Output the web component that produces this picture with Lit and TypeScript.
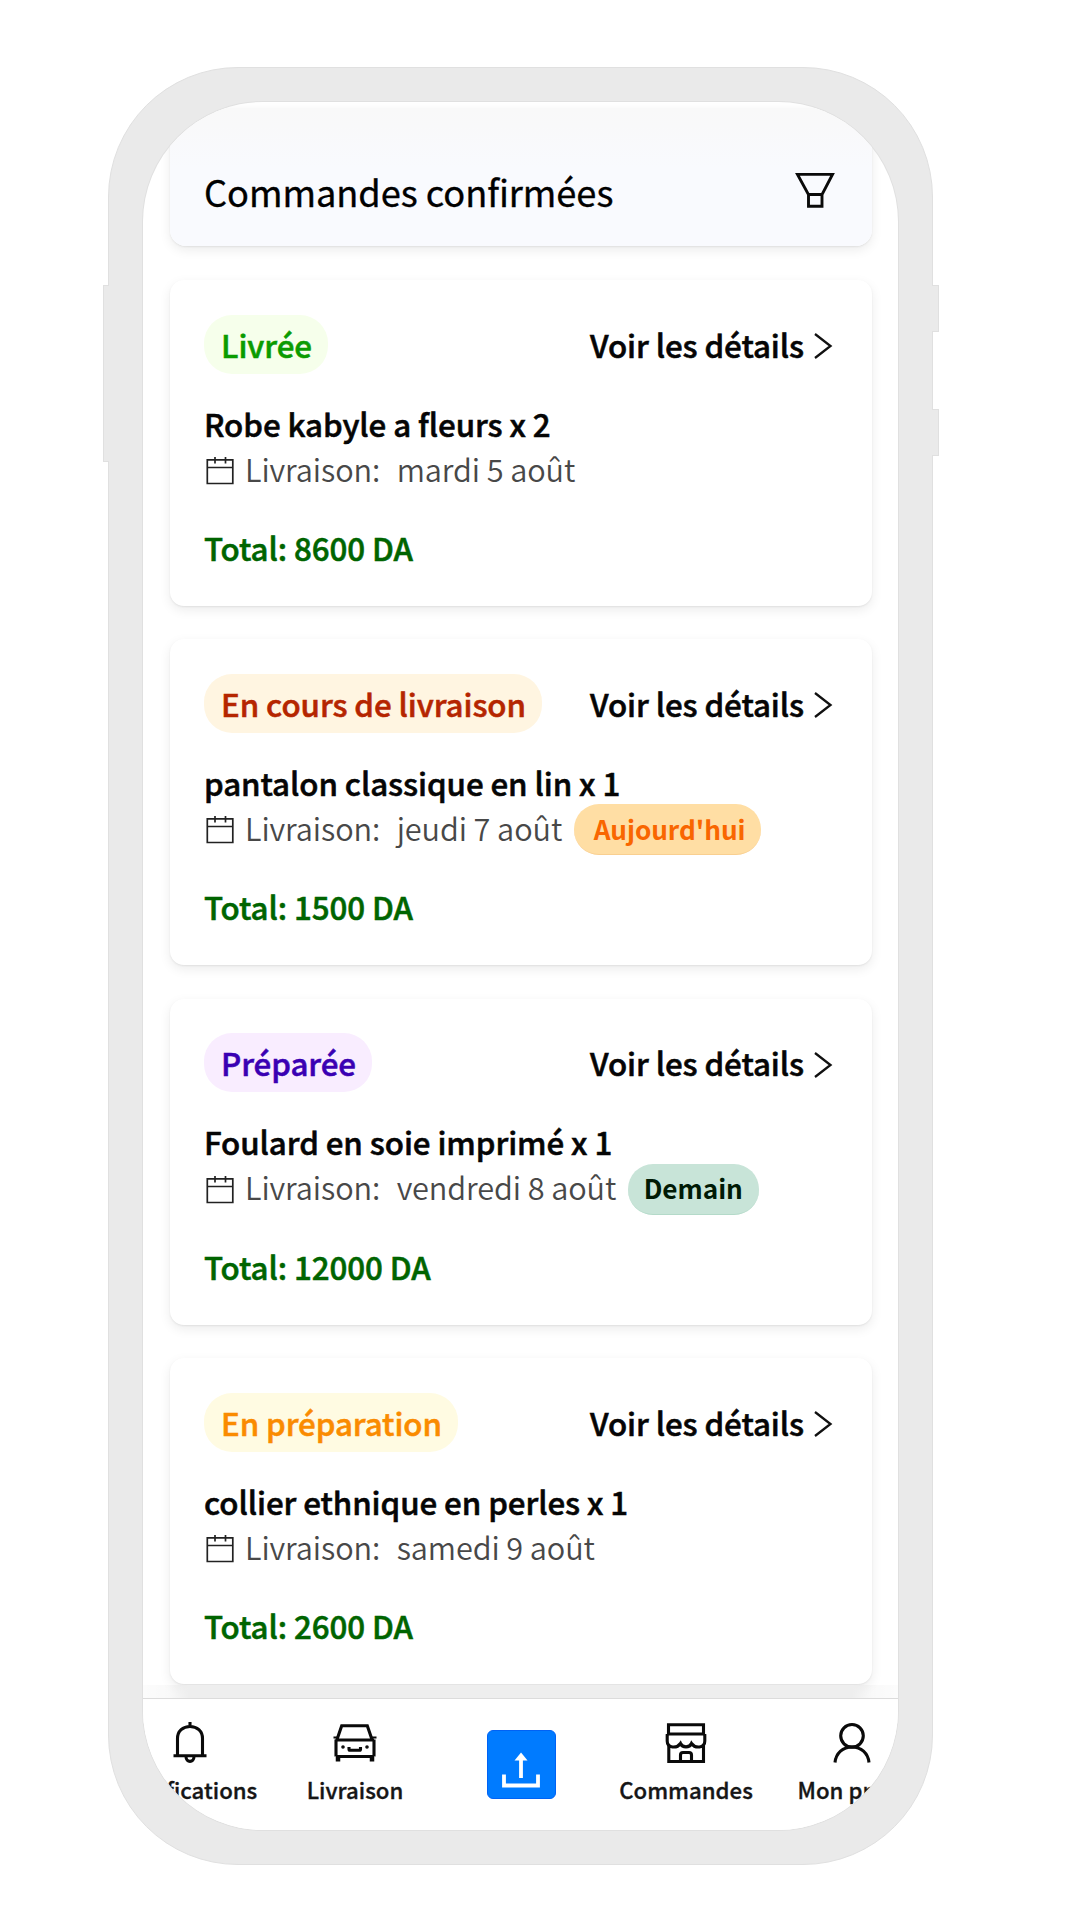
import { LitElement, html, css, svg, nothing } from "lit";
import { customElement, property } from "lit/decorators.js";
import { classMap } from "lit/directives/class-map.js";

type Status = "delivered" | "shipping" | "ready" | "preparing";

interface Order {
  status: Status;
  label: string;
  title: string;
  date: string;
  total: string;
  tag?: { text: string; kind: "today" | "tomorrow" };
}

const ORDERS: Order[] = [
  { status: "delivered", label: "Livrée", title: "Robe kabyle a fleurs x 2", date: "mardi 5 août", total: "8600 DA" },
  {
    status: "shipping", label: "En cours de livraison", title: "pantalon classique en lin x 1", date: "jeudi 7 août",
    total: "1500 DA", tag: { text: "Aujourd'hui", kind: "today" },
  },
  {
    status: "ready", label: "Préparée", title: "Foulard en soie imprimé x 1", date: "vendredi 8 août",
    total: "12000 DA", tag: { text: "Demain", kind: "tomorrow" },
  },
  { status: "preparing", label: "En préparation", title: "collier ethnique en perles x 1", date: "samedi 9 août", total: "2600 DA" },
];

@customElement("order-card")
export class OrderCard extends LitElement {
  @property({ attribute: false }) order!: Order;

  static styles = css`
    :host { display: block; }
    .card {
      box-sizing: border-box;
      height: 326px;
      padding: 34px 39px 35px 34px;
      border-radius: 14px;
      background: #fff;
      box-shadow: 0 1px 2px rgba(0, 0, 0, 0.07), 0 4px 12px rgba(0, 0, 0, 0.08);
      font-size: 31.3px;
      line-height: 45px;
      font-weight: 500;
      letter-spacing: -0.08px;
      -webkit-text-stroke: 0.55px currentColor;
      color: #050505;
      white-space: nowrap;
    }
    .top { display: flex; align-items: center; justify-content: space-between; height: 60px; margin-bottom: 26.5px; }
    .status { display: flex; align-items: center; height: 59px; padding: 0 16.500px 0 17px; border-radius: 28px; }
    .delivered { color: #0a9b00; background: #f6ffeb; }
    .shipping { color: #b52500; background: #fff5e1; }
    .ready { color: #3a00b3; background: #f9edff; }
    .preparing { color: #fa8b00; background: #fffbe2; }
    .details { display: flex; align-items: center; gap: 9px; }
    .chevron { display: block; width: 20px; height: 28px; margin-top: 4px; }
    .delivery {
      display: flex; align-items: center; height: 45px; font-weight: 350; font-size: 30.700px; letter-spacing: -0.100px;
      color: #484848; -webkit-text-stroke-width: 0;
    }
    .calendar { display: block; width: 30px; height: 30px; margin: 6px 10.500px 0 0.500px; }
    .date { margin-left: 16.500px; }
    .tag {
      display: flex; align-items: center; box-sizing: border-box; height: 51px; margin: 5px 0 0 11.500px;
      border-radius: 25px; font-weight: 700; font-size: 26.200px; letter-spacing: -0.050px;
    }
    .today { padding: 0 16px 0 20px; color: #f96600; background: #ffdea4; border-bottom: 1px solid #f9cf90; }
    .tomorrow { padding: 0 16px; color: #001a05; background: #c8e4d8; border-bottom: 1px solid #b4dac9; }
    .total { margin-top: 34.5px; color: #006400; }
  `;

  render() {
    const o = this.order;
    return html`
      <article class="card">
        <div class="top">
          <span class=${classMap({ status: true, [o.status]: true })}>${o.label}</span>
          <span class="details">
            <span>Voir les détails</span>
            <svg class="chevron" viewBox="0 0 20 28" fill="none" stroke="#111" stroke-width="2.300">
              <path d="M2 2 17.500 14 2 26" />
            </svg>
          </span>
        </div>
        <div>${o.title}</div>
        <div class="delivery">
          <svg class="calendar" viewBox="0 0 30 30" fill="none" stroke="#222" stroke-width="1.700">
            <path d="M2.300 3.800h25.500v23.700h-25.500zM2.300 11.500h25.500M10 1v6.500M20.500 1v6.500" />
          </svg>
          <span>Livraison:</span>
          <span class="date">${o.date}</span>
          ${o.tag ? html`<span class=${classMap({ tag: true, [o.tag.kind]: true })}>${o.tag.text}</span>` : nothing}
        </div>
        <div class="total">Total: ${o.total}</div>
      </article>
    `;
  }
}

const BELL = svg`
  <path d="M22 1v5M9.500 34.500V17.500C9.500 10 15 5.500 22 5.500S34.500 10 34.500 17.500V34.500M5.500 34.800H38.500" />
  <path d="M18 35.500c0 6.500 8 6.500 8 0" />`;
const CAR = svg`
  <path d="M3.500 20 8.700 4.800H34.300L39.500 20M3 18.500V35.500M41 18.500V35.500M3 19H41M3 35.500H41" />
  <path d="M.5 16.500H6M38 16.500H43.500" stroke-width="2.200" />
  <path d="M5 36v4.500M39 36v4.500" stroke-width="4.500" />
  <path d="M16 26v2.200q0 1 1 1H26.500q1 0 1-1V26" />
  <circle cx="10" cy="26" r="1" stroke-width="1.600" /><circle cx="34" cy="26" r="1" stroke-width="1.600" />`;
const SHOP = svg`
  <path d="M4.500 3.800H39.500V13H4.500zM4.500 13 3.200 14V20C3.200 27.500 13 27.500 16.500 22.500C18.500 27 25.500 27 27.500 22.500C31 27.500 40.800 27.500 40.800 20V14L39.500 13" />
  <path d="M4.800 25V40.500H39.500V25M16.500 40V34q0-2.500 2.500-2.500h6q2.500 0 2.500 2.500v6" />`;
const USER = svg`
  <circle cx="22" cy="14.800" r="11.300" />
  <path d="M5 41.500C6 32 13 26 22 26S38 32 39 41.500" />`;

@customElement("app-root")
export class AppRoot extends LitElement {
  static styles = css`
    :host {
      display: block; box-sizing: border-box; width: 1080px; height: 1920px; padding: 67px 0 0 103px; overflow: hidden;
      background: #fff; font-family: "Noto Sans CJK SC", "Noto Sans", sans-serif; color: #000;
    }
    .device { display: flex; align-items: flex-start; }
    .keys { display: flex; flex-direction: column; }
    .key { box-sizing: border-box; background: #eaeaea; border: 1px solid #e0e0e0; }
    .left { padding-top: 218px; }
    .left .key { width: 6px; height: 177px; border-right: 0; margin-right: -1px; z-index: 1; }
    .right { padding-top: 218px; gap: 77px; }
    .right .key { width: 7px; height: 47px; border-left: 0; margin-left: -1px; z-index: 1; }
    .phone {
      box-sizing: border-box; width: 825px; height: 1798px; padding: 34px; border: 1px solid #e0e0e0;
      border-radius: 130px; background: #eaeaea;
    }
    .screen {
      display: flex; flex-direction: column; box-sizing: border-box; width: 755px; height: 1728px; overflow: hidden;
      border-radius: 120px; background: #fff; padding-top: 6px; box-shadow: 0 0 0 1px #e0e0e0;
    }
    .header {
      display: flex; align-items: center; justify-content: space-between; box-sizing: border-box; flex: none;
      height: 138px; margin: 0 26px 34px 27px; padding: 22px 37px 0 34px; border-radius: 0 0 16px 16px;
      background: linear-gradient(#f9f9f9 0, #f9f9fa 18px, #f9fafe 60px);
      box-shadow: 0 1px 2px rgba(0, 0, 0, 0.07), 0 4px 12px rgba(0, 0, 0, 0.08);
    }
    .title {
      margin: 6px 0 0; font-size: 36.2px; line-height: 45px; font-weight: 400; white-space: nowrap;
      letter-spacing: -0.030px; -webkit-text-stroke: 0.350px currentColor;
    }
    .funnel { display: block; width: 40px; height: 38px; margin-top: 4px; }
    .list { display: flex; flex-direction: column; flex: 1; min-height: 0; gap: 33.400px; padding: 0 26px 0 27px; }
    .list order-card { flex: none; }
    .edge {
      flex: none; height: 13px; margin-top: -13px;
      background: linear-gradient(to right, rgba(0, 0, 0, 0.01), rgba(0, 0, 0, 0.025) 26px, #eee 46px, #eee 709px, rgba(0, 0, 0, 0.025) 729px, rgba(0, 0, 0, 0.01));
    }
    .nav {
      display: flex; justify-content: center; flex: none; box-sizing: border-box; height: 132px;
      border-top: 1px solid #dcdcdc; background: #fff;
    }
    .item {
      display: flex; flex-direction: column; align-items: center; flex: none; width: 165.500px; padding-top: 22px;
      font-size: 22.200px; line-height: 28px; font-weight: 500; color: #161616; white-space: nowrap; box-sizing: border-box;
      -webkit-text-stroke: 0.350px currentColor;
    }
    .icon { display: block; width: 44px; height: 44px; margin-bottom: 9.500px; }
    .upload {
      display: flex; align-items: center; justify-content: center; box-sizing: border-box; width: 69px; height: 69px;
      margin: 8.500px 0 0 1px; border: 1px solid #0062f5; border-radius: 6px; background: #007bff;
    }
    .arrow { display: block; width: 40px; height: 40px; margin-top: 12px; }
  `;

  private item(icon: unknown, label: string) {
    return html`
      <div class="item">
        <svg class="icon" viewBox="0 0 44 44" fill="none" stroke="#0a0a0a" stroke-width="3.100">${icon}</svg>
        <span>${label}</span>
      </div>`;
  }

  render() {
    return html`
      <div class="device">
        <div class="keys left"><div class="key"></div></div>
        <main class="phone">
          <div class="screen">
            <header class="header">
              <h1 class="title">Commandes confirmées</h1>
              <svg class="funnel" viewBox="0 0 40 38" fill="none" stroke="#0a0a0a" stroke-width="2.900">
                <path d="M2.500 3.400H37.500L27 23.500V35.300H13.500V23.500zM13.500 23.500H27" />
              </svg>
            </header>
            <section class="list">${ORDERS.map((o) => html`<order-card .order=${o}></order-card>`)}</section>
            <div class="edge"></div>
            <nav class="nav">
              ${this.item(BELL, "Notifications")}
              ${this.item(CAR, "Livraison")}
              <div class="item">
                <div class="upload">
                  <svg class="arrow" viewBox="0 0 40 40" fill="none" stroke="#fff" stroke-width="3.800">
                    <path d="M3 24.500V35.500H37V24.500M20 28V8" />
                    <path d="M20 2.500 26.500 10.500H13.500z" fill="#fff" stroke="none" />
                  </svg>
                </div>
              </div>
              ${this.item(SHOP, "Commandes")}
              ${this.item(USER, "Mon profil")}
            </nav>
          </div>
        </main>
        <div class="keys right"><div class="key"></div><div class="key"></div></div>
      </div>
    `;
  }
}
